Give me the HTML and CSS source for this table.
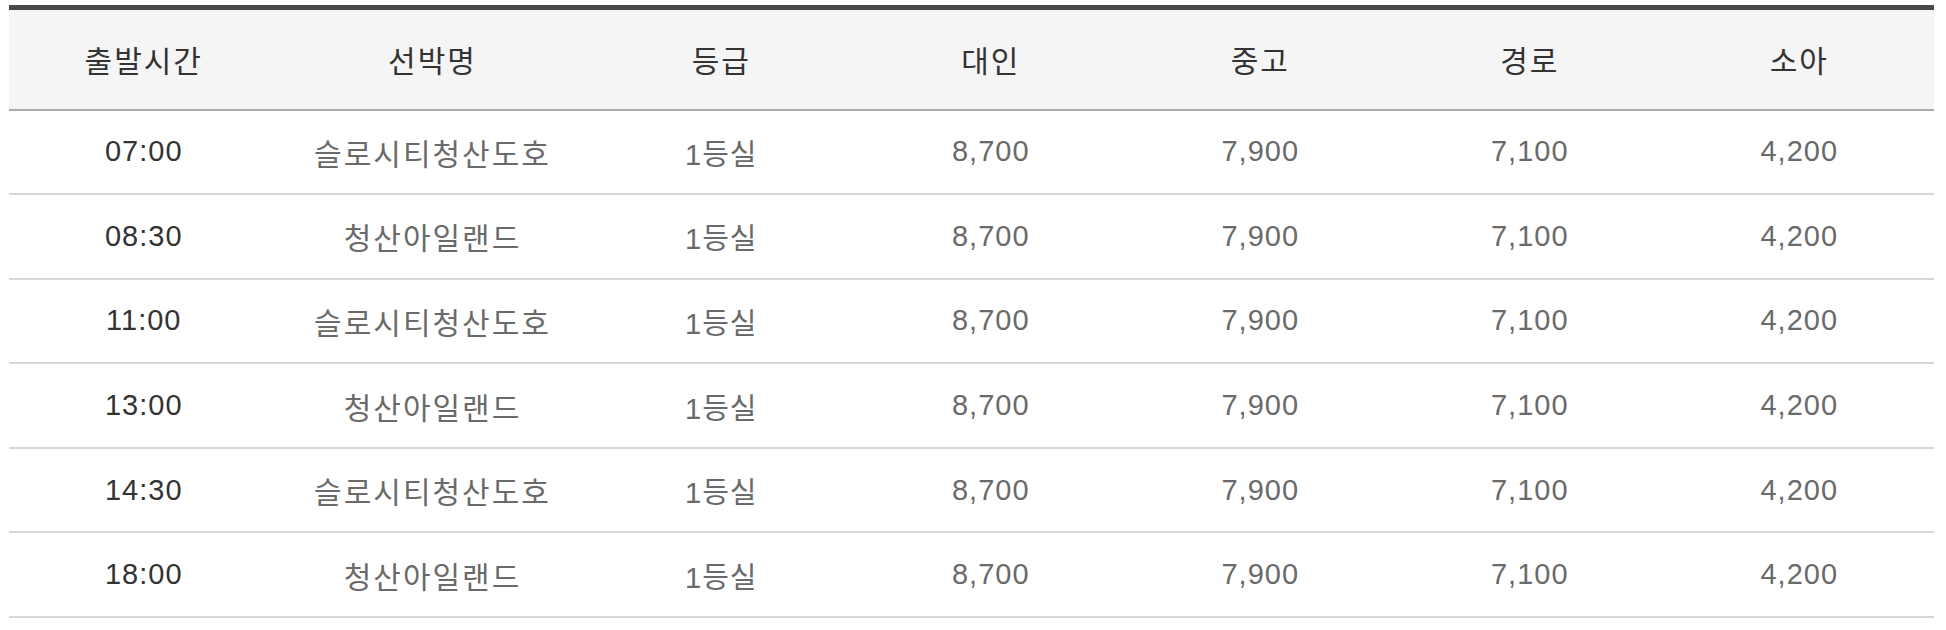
FILE: index.html
```html
<!DOCTYPE html>
<html lang="ko">
<head>
<meta charset="utf-8">
<title>운항시간표</title>
<link rel="stylesheet" href="styles.css">
</head>
<body>
<div class="wrap">
<table class="fare">
<colgroup>
<col class="c-narrow"><col class="c-wide"><col class="c-narrow"><col class="c-narrow"><col class="c-narrow"><col class="c-narrow"><col class="c-narrow">
</colgroup>
<thead>
<tr><th>출발시간</th><th>선박명</th><th>등급</th><th>대인</th><th>중고</th><th>경로</th><th>소아</th></tr>
</thead>
<tbody>
<tr><td class="time">07:00</td><td class="ko">슬로시티청산도호</td><td>1등실</td><td>8,700</td><td>7,900</td><td>7,100</td><td>4,200</td></tr>
<tr><td class="time">08:30</td><td class="ko">청산아일랜드</td><td>1등실</td><td>8,700</td><td>7,900</td><td>7,100</td><td>4,200</td></tr>
<tr><td class="time">11:00</td><td class="ko">슬로시티청산도호</td><td>1등실</td><td>8,700</td><td>7,900</td><td>7,100</td><td>4,200</td></tr>
<tr><td class="time">13:00</td><td class="ko">청산아일랜드</td><td>1등실</td><td>8,700</td><td>7,900</td><td>7,100</td><td>4,200</td></tr>
<tr><td class="time">14:30</td><td class="ko">슬로시티청산도호</td><td>1등실</td><td>8,700</td><td>7,900</td><td>7,100</td><td>4,200</td></tr>
<tr><td class="time">18:00</td><td class="ko">청산아일랜드</td><td>1등실</td><td>8,700</td><td>7,900</td><td>7,100</td><td>4,200</td></tr>
</tbody>
</table>
</div>
</body>
</html>
```
FILE: styles.css
```css
html, body {
  margin: 0;
  padding: 0;
  background: #fff;
}
.wrap {
  padding: 5px 0 0 9px;
}
.fare {
  width: 1925px;
  border-collapse: collapse;
  table-layout: fixed;
  border-top: 5px solid #484848;
  font-family: "Liberation Sans", "Noto Sans CJK KR", sans-serif;
  font-size: 29px;
  letter-spacing: 1px;
}
.c-narrow { width: 14%; }
.c-wide { width: 16%; }
.fare th {
  height: 102px;
  padding: 0;
  background: #f5f5f5;
  color: #333;
  font-weight: normal;
  font-size: 30px;
  letter-spacing: 2px;
  text-align: center;
  border-bottom: 2px solid #aaaaaa;
  box-sizing: border-box;
}
.fare td {
  height: 84.6px;
  padding: 0;
  color: #6a6a6a;
  text-align: center;
  border-bottom: 2px solid #d6d6d6;
  box-sizing: border-box;
}
.fare td.ko {
  font-size: 30px;
  letter-spacing: 2px;
}
.fare td.time {
  color: #333;
}
```
